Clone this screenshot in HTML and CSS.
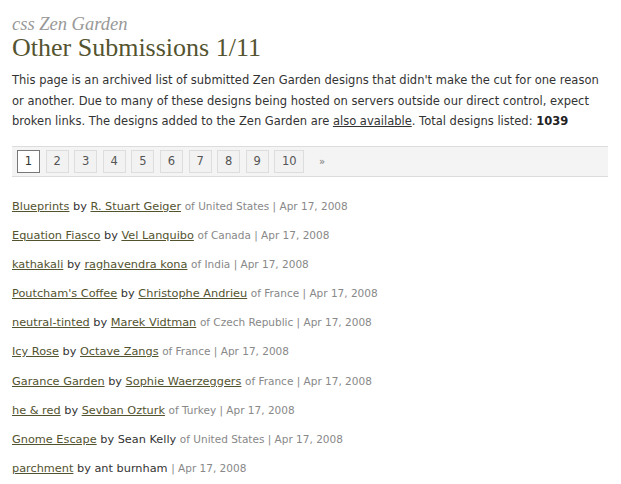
FILE: index.html
```html
<!DOCTYPE html>
<html>
<head>
<meta charset="utf-8">
<link rel="stylesheet" href="styles.css">
</head>
<body>
<div class="page">
  <div class="site">css Zen Garden</div>
  <h1 class="title">Other Submissions 1/11</h1>
  <p class="intro">This page is an archived list of submitted Zen Garden designs that didn't make the cut for one reason or another. Due to many of these designs being hosted on servers outside our direct control, expect broken links. The designs added to the Zen Garden are <a href="#" class="plain">also available</a>. Total designs listed: <strong>1039</strong></p>
  <div class="pager">
    <span class="pg current">1</span>
    <a class="pg" href="#">2</a>
    <a class="pg" href="#">3</a>
    <a class="pg" href="#">4</a>
    <a class="pg" href="#">5</a>
    <a class="pg" href="#">6</a>
    <a class="pg" href="#">7</a>
    <a class="pg" href="#">8</a>
    <a class="pg" href="#">9</a>
    <a class="pg wide" href="#">10</a>
    <a class="next" href="#">&raquo;</a>
  </div>
  <ul class="list">
    <li><a href="#">Blueprints</a> by <a href="#">R. Stuart Geiger</a> <span class="meta">of United States | Apr 17, 2008</span></li>
    <li><a href="#">Equation Fiasco</a> by <a href="#">Vel Lanquibo</a> <span class="meta">of Canada | Apr 17, 2008</span></li>
    <li><a href="#">kathakali</a> by <a href="#">raghavendra kona</a> <span class="meta">of India | Apr 17, 2008</span></li>
    <li><a href="#">Poutcham's Coffee</a> by <a href="#">Christophe Andrieu</a> <span class="meta">of France | Apr 17, 2008</span></li>
    <li><a href="#">neutral-tinted</a> by <a href="#">Marek Vidtman</a> <span class="meta">of Czech Republic | Apr 17, 2008</span></li>
    <li><a href="#">Icy Rose</a> by <a href="#">Octave Zangs</a> <span class="meta">of France | Apr 17, 2008</span></li>
    <li><a href="#">Garance Garden</a> by <a href="#">Sophie Waerzeggers</a> <span class="meta">of France | Apr 17, 2008</span></li>
    <li><a href="#">he &amp; red</a> by <a href="#">Sevban Ozturk</a> <span class="meta">of Turkey | Apr 17, 2008</span></li>
    <li><a href="#">Gnome Escape</a> by Sean Kelly <span class="meta">of United States | Apr 17, 2008</span></li>
    <li><a href="#">parchment</a> by ant burnham <span class="meta">| Apr 17, 2008</span></li>
  </ul>
</div>
</body>
</html>
```
FILE: styles.css
```css
html, body {
  margin: 0;
  padding: 0;
  background: #fff;
}
body {
  font-family: "DejaVu Sans", Verdana, sans-serif;
  font-size: 11.3px;
  color: #333;
}
.page {
  padding: 14px 13px 0 12px;
}
.site {
  font-family: "Liberation Serif", Georgia, serif;
  font-style: italic;
  font-size: 18.5px;
  line-height: 20px;
  color: #999;
}
.title {
  margin: 0;
  font-family: "Liberation Serif", Georgia, serif;
  font-weight: normal;
  font-size: 26px;
  line-height: 28px;
  color: #545430;
}
.intro {
  margin: 8px -6px 0 0;
  line-height: 20.5px;
  font-size: 11.5px;
}
.intro a.plain {
  color: #333;
}
.intro strong {
  color: #222;
}
.pager {
  margin-top: 14px;
  display: flex;
  align-items: center;
  gap: 5.6px;
  height: 29px;
  padding: 0 5px;
  background: #f4f4f4;
  border-top: 1px solid #dcdcdc;
  border-bottom: 1px solid #dcdcdc;
}
.pg {
  display: flex;
  align-items: center;
  justify-content: center;
  width: 21px;
  height: 21px;
  border: 1px solid #ddd;
  background: #f2f2f2;
  color: #555;
  text-decoration: none;
  font-size: 11.5px;
}
.pg.wide {
  width: 28px;
}
.pg.current {
  background: #fff;
  border-color: #777;
  color: #333;
}
.next {
  margin-left: 9px;
  color: #777;
  text-decoration: none;
  font-size: 10px;
}
.list {
  list-style: none;
  margin: 22px 0 0;
  padding: 0;
}
.list li {
  height: 29.2px;
  line-height: 15px;
}
.list a {
  color: #535330;
}
.meta {
  color: #888;
  font-size: 10.5px;
}
```
